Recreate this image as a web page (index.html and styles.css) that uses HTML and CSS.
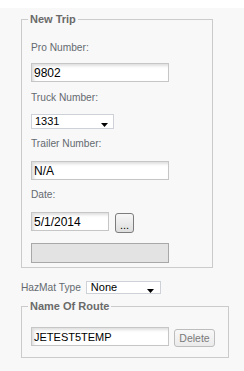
FILE: index.html
```html
<!DOCTYPE html>
<html>
<head>
<meta charset="utf-8">
<link rel="stylesheet" href="styles.css">
</head>
<body>
<div class="page">
  <fieldset class="box trip">
    <legend>New Trip</legend>
    <label class="lbl mb9">Pro Number:</label>
    <input class="txt mb10" type="text" value="9802">
    <label class="lbl mb10">Truck Number:</label>
    <div class="sel sel-truck mb9"><span>1331</span><svg class="arrow" width="7" height="4" viewBox="0 0 7 4"><polygon points="0,0 7,0 3.5,4" fill="#000"/></svg></div>
    <label class="lbl mb11">Trailer Number:</label>
    <input class="txt mb9" type="text" value="N/A">
    <label class="lbl mb11">Date:</label>
    <div class="date-row mb10">
      <input class="txt date" type="text" value="5/1/2014">
      <button class="pick" type="button">...</button>
    </div>
    <div class="blank"></div>
  </fieldset>

  <div class="haz">
    <span class="haz-lbl">HazMat Type</span>
    <div class="sel sel-haz"><span>None</span><svg class="arrow" width="7" height="4" viewBox="0 0 7 4"><polygon points="0,0 7,0 3.5,4" fill="#000"/></svg></div>
  </div>

  <fieldset class="box route">
    <legend>Name Of Route</legend>
    <div class="route-row">
      <input class="txt route-txt" type="text" value="JETEST5TEMP">
      <button class="del" type="button">Delete</button>
    </div>
  </fieldset>
</div>
</body>
</html>
```

FILE: styles.css
```css
* { box-sizing: border-box; }
html, body { margin: 0; padding: 0; background: #fff; }
body {
  padding-top: 8px;
  font-family: "Liberation Sans", Arial, sans-serif;
}
.page {
  background: #f8f8f8;
  height: 363px;
  padding: 5px 0 0 21px;
}
fieldset.box {
  margin: 0;
  min-width: 0;
  border: 1px solid #cbcbcb;
  display: flex;
  flex-direction: column;
  align-items: flex-start;
}
fieldset.box legend {
  font-size: 11px;
  font-weight: bold;
  line-height: 13px;
  color: #6a6a6a;
  padding: 0 2px;
  margin-left: -3px;
}
.trip {
  width: 192px;
  padding: 16px 9px 4px 9px;
}
.route {
  width: 208px;
  margin-top: 6px !important;
  padding: 14px 9px 10px 9px;
}
.lbl {
  display: block;
  font-size: 10.2px;
  line-height: 12px;
  height: 12px;
  color: #646a70;
}
.mb9 { margin-bottom: 9px; }
.mb10 { margin-bottom: 10px; }
.mb11 { margin-bottom: 11px; }

.txt {
  display: block;
  width: 138px;
  height: 19px;
  margin-top: 0;
  margin-left: 0;
  margin-right: 0;
  border: 1px solid #c6c6c6;
  background: #fff;
  box-shadow: inset 2px 2px 3px rgba(0,0,0,0.13);
  padding: 0 2px;
  font-family: "Liberation Sans", Arial, sans-serif;
  font-size: 12px;
  color: #000;
  outline: none;
}
.sel {
  display: flex;
  justify-content: space-between;
  background: #fff;
  border: 1px solid #cfd1d8;
  color: #000;
  font-size: 11px;
}
.sel span { line-height: 13px; }
.sel .arrow { align-self: flex-end; }
.sel-truck {
  width: 83px;
  height: 15px;
  padding: 0 5px 0 3px;
}
.sel-truck .arrow { margin-bottom: 1px; }
.sel-haz {
  width: 75px;
  height: 13px;
  padding: 0 6px 0 4px;
}
.sel-haz span { line-height: 11px; }
.sel-haz .arrow { margin-bottom: 0; }

.date-row {
  display: flex;
  align-items: flex-start;
  gap: 6px;
  height: 21px;
}
.date { width: 78px; }
.pick {
  margin: 1px 0 0 0;
  width: 19px;
  height: 20px;
  border: 1px solid #7c7c7c;
  border-radius: 3px;
  background: linear-gradient(#f7f7f7, #dedede);
  font-family: "Liberation Sans", Arial, sans-serif;
  font-size: 11px;
  line-height: 11px;
  color: #000;
  padding: 5px 0 0 0;
}
.blank {
  width: 138px;
  height: 20px;
  background: #e3e3e3;
  border: 1px solid #a8a8a8;
}

.haz {
  display: flex;
  align-items: center;
  gap: 5px;
  margin-top: 13px;
  height: 13px;
}
.haz-lbl {
  font-size: 10.2px;
  line-height: 13px;
  color: #646a70;
}

.route-row {
  display: flex;
  align-items: flex-start;
  gap: 5px;
  height: 20px;
}
.route-txt { font-size: 11px; }
.del {
  margin: 2px 0 0 0;
  width: 41px;
  height: 18px;
  border: 1px solid #bdbdbd;
  border-radius: 3px;
  background: linear-gradient(#f8f8f8, #ebebeb);
  font-family: "Liberation Sans", Arial, sans-serif;
  font-size: 10.5px;
  color: #7a7a7a;
  padding: 0;
}
```
